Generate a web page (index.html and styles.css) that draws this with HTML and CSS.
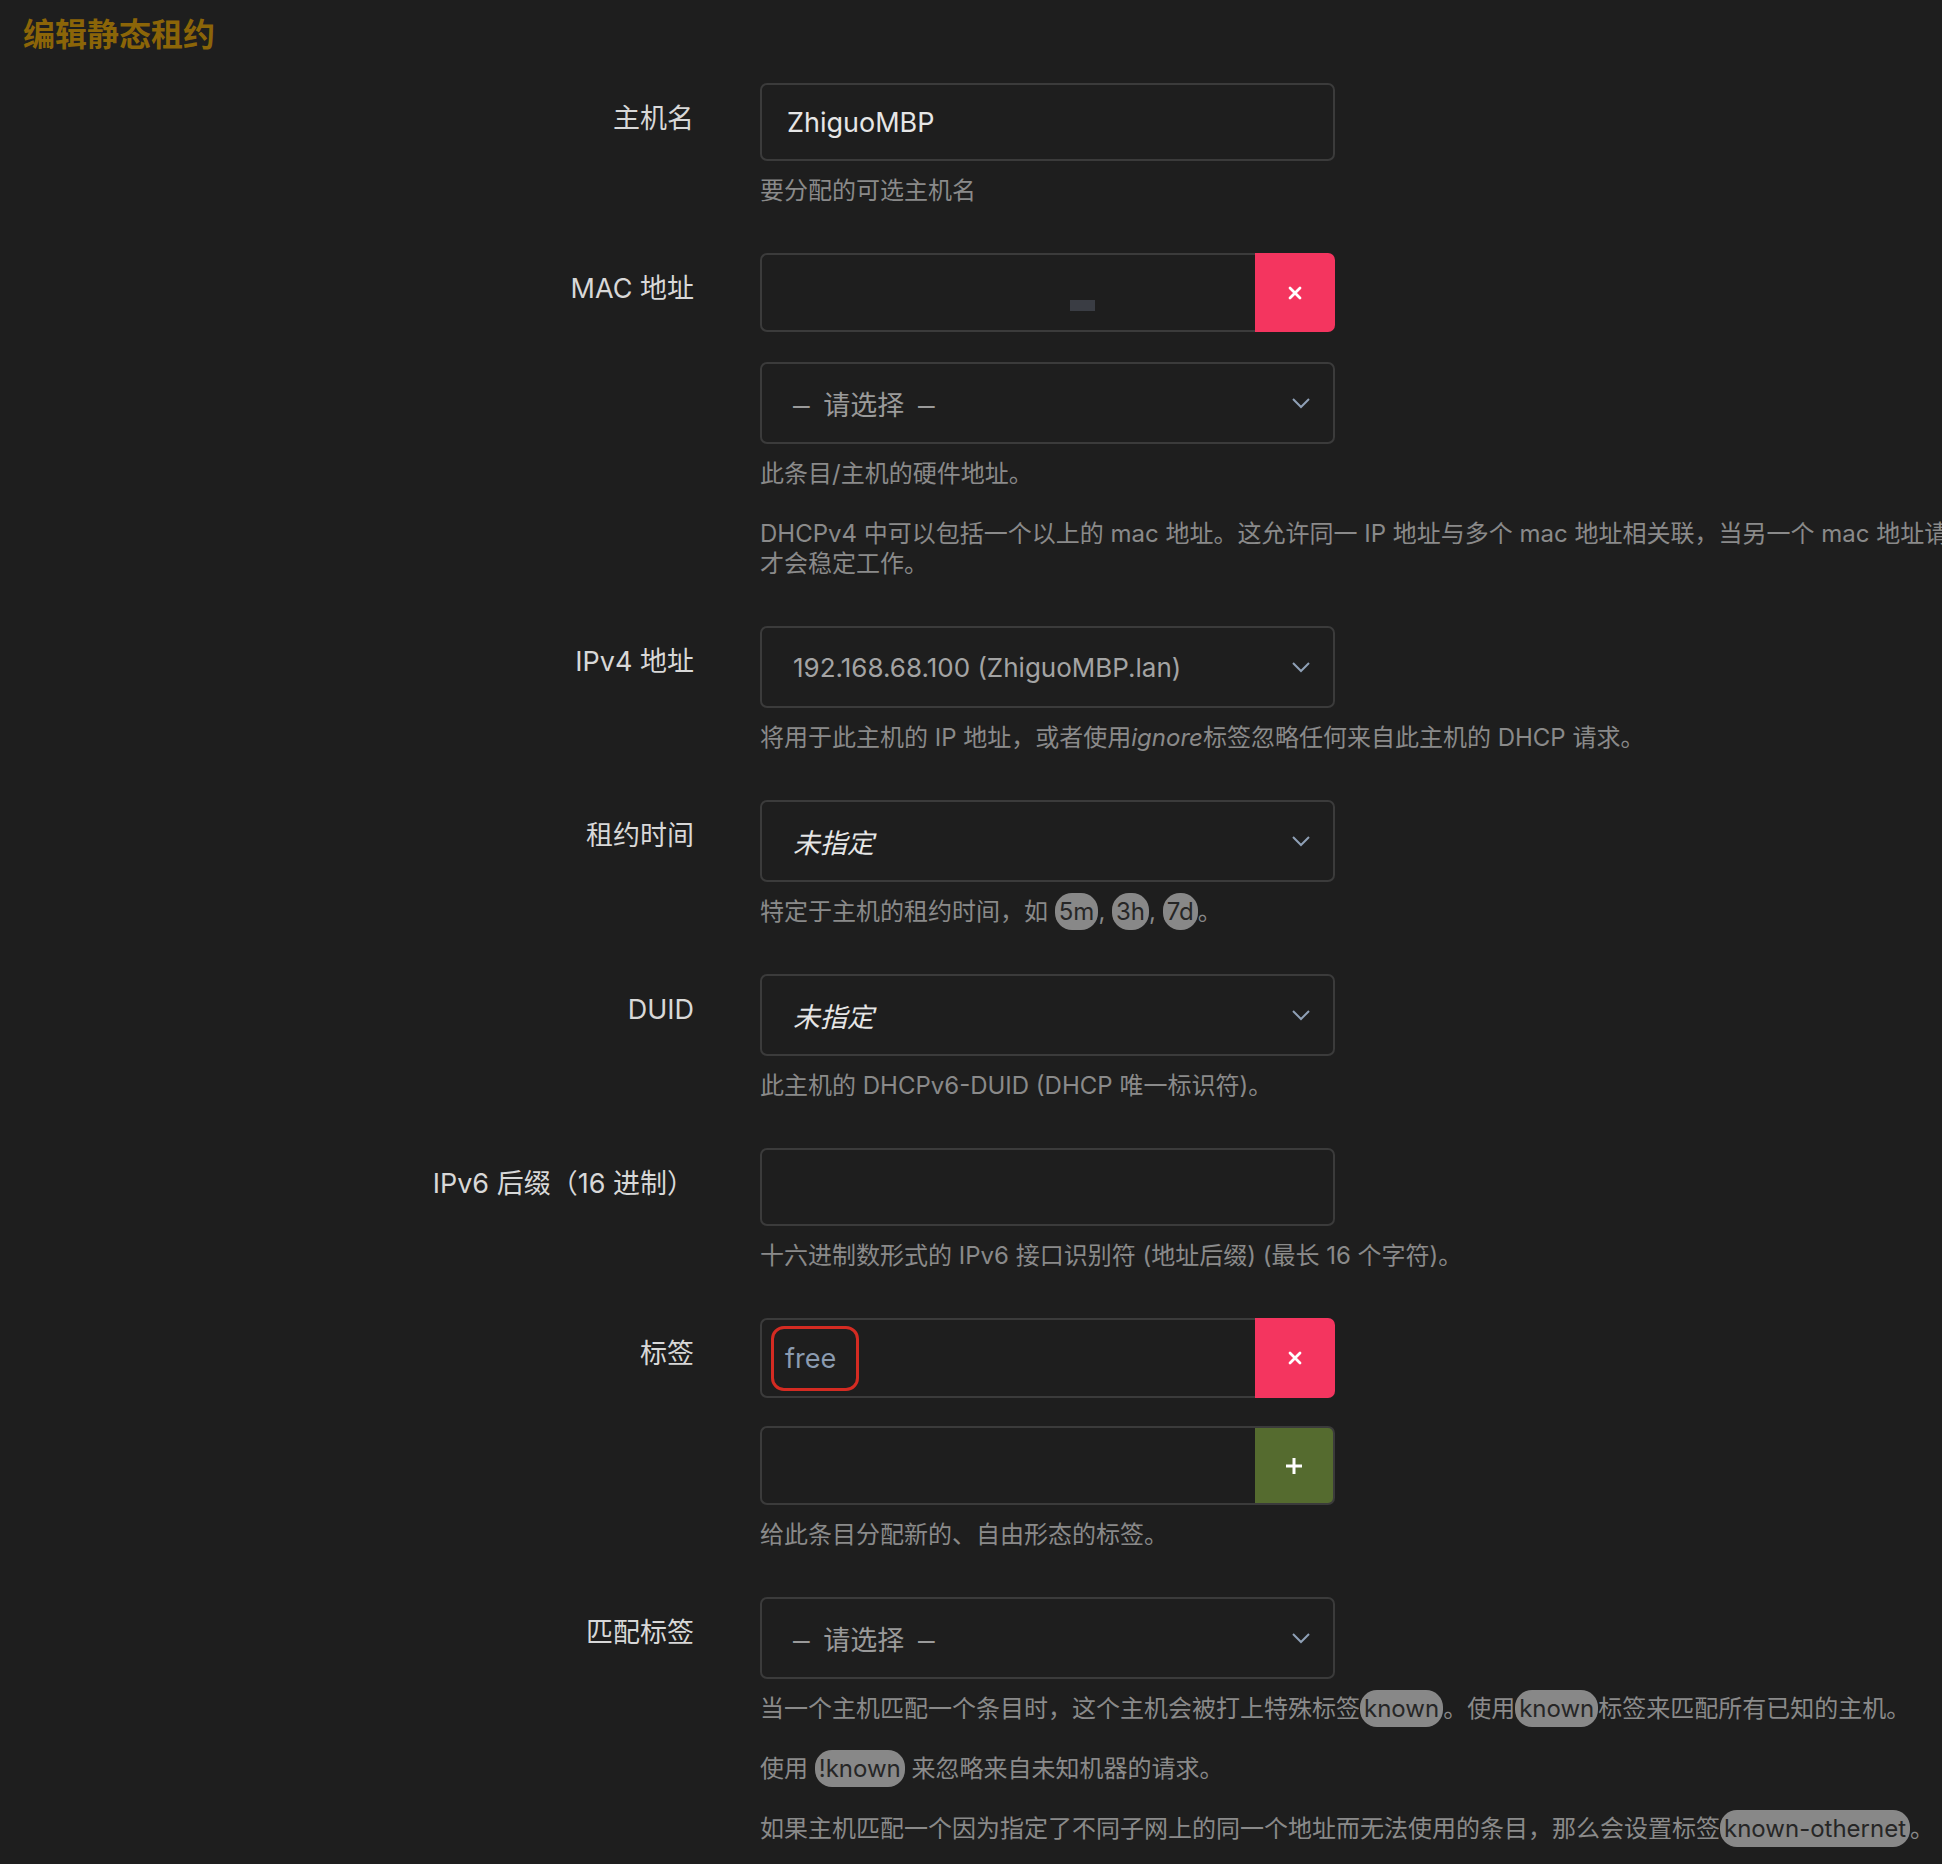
FILE: index.html
```html
<!DOCTYPE html>
<html lang="zh-CN">
<head>
<meta charset="utf-8">
<title>编辑静态租约</title>
<link rel="stylesheet" href="styles.css">
</head>
<body>
<h2 class="title">编辑静态租约</h2>

<div class="row">
  <label class="lbl">主机名</label>
  <div class="field">
    <input class="txt" type="text" value="ZhiguoMBP">
    <div class="help">要分配的可选主机名</div>
  </div>
</div>

<div class="row">
  <label class="lbl">MAC 地址</label>
  <div class="field">
    <div class="group">
      <div class="gbox mac"><span class="caret-block"></span></div>
      <div class="gbtn del"><svg width="16" height="16" viewBox="0 0 16 16"><path d="M3 3L13 13M13 3L3 13" stroke="#fff" stroke-width="2.8" stroke-linecap="round"/></svg></div>
    </div>
    <div class="sel gap"><span class="ph"><span class="dash">–</span> 请选择 <span class="dash">–</span></span><svg class="chev" width="20" height="12" viewBox="0 0 20 12"><path d="M2 2L10 10L18 2" stroke="#8fa0b6" stroke-width="2" fill="none"/></svg></div>
    <div class="help">此条目/主机的硬件地址。<br><br><span class="nowrap">DHCPv4 中可以包括一个以上的 mac 地址。这允许同一 IP 地址与多个 mac 地址相关联，当另一个 mac 地址请求</span><br>才会稳定工作。</div>
  </div>
</div>

<div class="row">
  <label class="lbl">IPv4 地址</label>
  <div class="field">
    <div class="sel"><span class="val">192.168.68.100 (ZhiguoMBP.lan)</span><svg class="chev" width="20" height="12" viewBox="0 0 20 12"><path d="M2 2L10 10L18 2" stroke="#8fa0b6" stroke-width="2" fill="none"/></svg></div>
    <div class="help">将用于此主机的 IP 地址，或者使用<em>ignore</em>标签忽略任何来自此主机的 DHCP 请求。</div>
  </div>
</div>

<div class="row">
  <label class="lbl">租约时间</label>
  <div class="field">
    <div class="sel"><em class="unset">未指定</em><svg class="chev" width="20" height="12" viewBox="0 0 20 12"><path d="M2 2L10 10L18 2" stroke="#8fa0b6" stroke-width="2" fill="none"/></svg></div>
    <div class="help">特定于主机的租约时间，如 <code class="badge">5m</code>, <code class="badge">3h</code>, <code class="badge">7d</code>。</div>
  </div>
</div>

<div class="row">
  <label class="lbl">DUID</label>
  <div class="field">
    <div class="sel"><em class="unset">未指定</em><svg class="chev" width="20" height="12" viewBox="0 0 20 12"><path d="M2 2L10 10L18 2" stroke="#8fa0b6" stroke-width="2" fill="none"/></svg></div>
    <div class="help">此主机的 DHCPv6-DUID (DHCP 唯一标识符)。</div>
  </div>
</div>

<div class="row">
  <label class="lbl">IPv6 后缀（16 进制）</label>
  <div class="field">
    <input class="txt" type="text" value="">
    <div class="help">十六进制数形式的 IPv6 接口识别符 (地址后缀) (最长 16 个字符)。</div>
  </div>
</div>

<div class="row">
  <label class="lbl">标签</label>
  <div class="field">
    <div class="group tall">
      <div class="gbox tagbox"><span class="tag">free</span></div>
      <div class="gbtn del"><svg width="16" height="16" viewBox="0 0 16 16"><path d="M3 3L13 13M13 3L3 13" stroke="#fff" stroke-width="2.8" stroke-linecap="round"/></svg></div>
    </div>
    <div class="group gap2">
      <div class="gbox"></div>
      <div class="gbtn add"><svg width="20" height="20" viewBox="0 0 20 20"><path d="M10 2V18M2 10H18" stroke="#fff" stroke-width="3"/></svg></div>
    </div>
    <div class="help">给此条目分配新的、自由形态的标签。</div>
  </div>
</div>

<div class="row">
  <label class="lbl">匹配标签</label>
  <div class="field">
    <div class="sel"><span class="ph"><span class="dash">–</span> 请选择 <span class="dash">–</span></span><svg class="chev" width="20" height="12" viewBox="0 0 20 12"><path d="M2 2L10 10L18 2" stroke="#8fa0b6" stroke-width="2" fill="none"/></svg></div>
    <div class="help">当一个主机匹配一个条目时，这个主机会被打上特殊标签<code class="badge">known</code>。使用<code class="badge">known</code>标签来匹配所有已知的主机。<br><br>使用 <code class="badge">!known</code> 来忽略来自未知机器的请求。<br><br>如果主机匹配一个因为指定了不同子网上的同一个地址而无法使用的条目，那么会设置标签<code class="badge">known-othernet</code>。</div>
  </div>
</div>
</body>
</html>
```

FILE: styles.css
```css
html, body {
  margin: 0;
  padding: 0;
  background: #1e1e1e;
  overflow: hidden;
}
body {
  font-family: "Inter", "Noto Sans CJK SC", sans-serif;
  color: #d6d6d6;
  width: 1942px;
  height: 1864px;
}
.title {
  margin: 0;
  padding: 13px 0 0 23px;
  font-family: "Noto Sans CJK SC", sans-serif;
  font-weight: 700;
  font-size: 32px;
  line-height: 38px;
  color: #8b6508;
  height: 83px;
  box-sizing: border-box;
}
.row {
  display: grid;
  grid-template-columns: 694px 1fr;
  column-gap: 66px;
  margin-bottom: 47px;
}
.lbl {
  text-align: right;
  font-size: 27px;
  line-height: 36px;
  padding-top: 18px;
  color: #d8d8d8;
  white-space: nowrap;
}
.field {
  min-width: 0;
}
.txt {
  display: block;
  box-sizing: border-box;
  width: 575px;
  height: 78px;
  margin: 0;
  padding: 0 25px;
  background: #1e1e1e;
  border: 2px solid #3b3b3b;
  border-radius: 7px;
  color: #e6e6e6;
  font-family: "Inter", "Noto Sans CJK SC", sans-serif;
  font-size: 27px;
  outline: none;
}
.group {
  display: flex;
  width: 575px;
  height: 79px;
}
.group.tall {
  height: 80px;
}
.gap2 {
  margin-top: 28px;
}
.gbox {
  flex: 1;
  box-sizing: border-box;
  border: 2px solid #3b3b3b;
  border-right: none;
  border-radius: 7px 0 0 7px;
  display: flex;
  align-items: flex-end;
}
.gbtn {
  width: 80px;
  display: flex;
  align-items: center;
  justify-content: center;
  border-radius: 0 7px 7px 0;
}
.del {
  background: #f4355f;
}
.add {
  background: #556b2f;
  border: 2px solid #3b3b3b;
  border-left: none;
  box-sizing: border-box;
}
.caret-block {
  display: block;
  width: 25px;
  height: 11px;
  background: #3a3d44;
  margin: 0 0 19px 308px;
}
.tagbox {
  align-items: center;
  padding-left: 9px;
}
.tag {
  display: inline-block;
  box-sizing: border-box;
  height: 65px;
  line-height: 59px;
  padding: 0 20px 0 11px;
  border: 3px solid #d42b22;
  border-radius: 13px;
  color: #8b9bb0;
  font-size: 27px;
}
.sel {
  box-sizing: border-box;
  width: 575px;
  height: 82px;
  border: 2px solid #3b3b3b;
  border-radius: 7px;
  display: flex;
  align-items: center;
  justify-content: space-between;
  padding: 0 22px 0 31px;
  font-size: 27px;
}
.sel.gap {
  margin-top: 30px;
}
.ph {
  color: #9a9a9a;
  word-spacing: 6px;
}
.dash {
  font-family: "Liberation Sans", sans-serif;
  font-size: 30px;
}
.val {
  color: #a4a4a4;
  font-size: 26px;
}
.unset {
  color: #e6e6e6;
  font-style: italic;
}
.chev {
  display: block;
}
.help {
  margin-top: 15px;
  font-size: 24px;
  line-height: 30px;
  color: #8a8a8a;
  white-space: nowrap;
}
.help em {
  font-style: italic;
}
.nowrap {
  white-space: nowrap;
}
.badge {
  font-family: "Inter", "Noto Sans CJK SC", sans-serif;
  font-size: 24px;
  background: #888888;
  color: #262626;
  border-radius: 17px;
  padding: 4px 4px;
}
```
